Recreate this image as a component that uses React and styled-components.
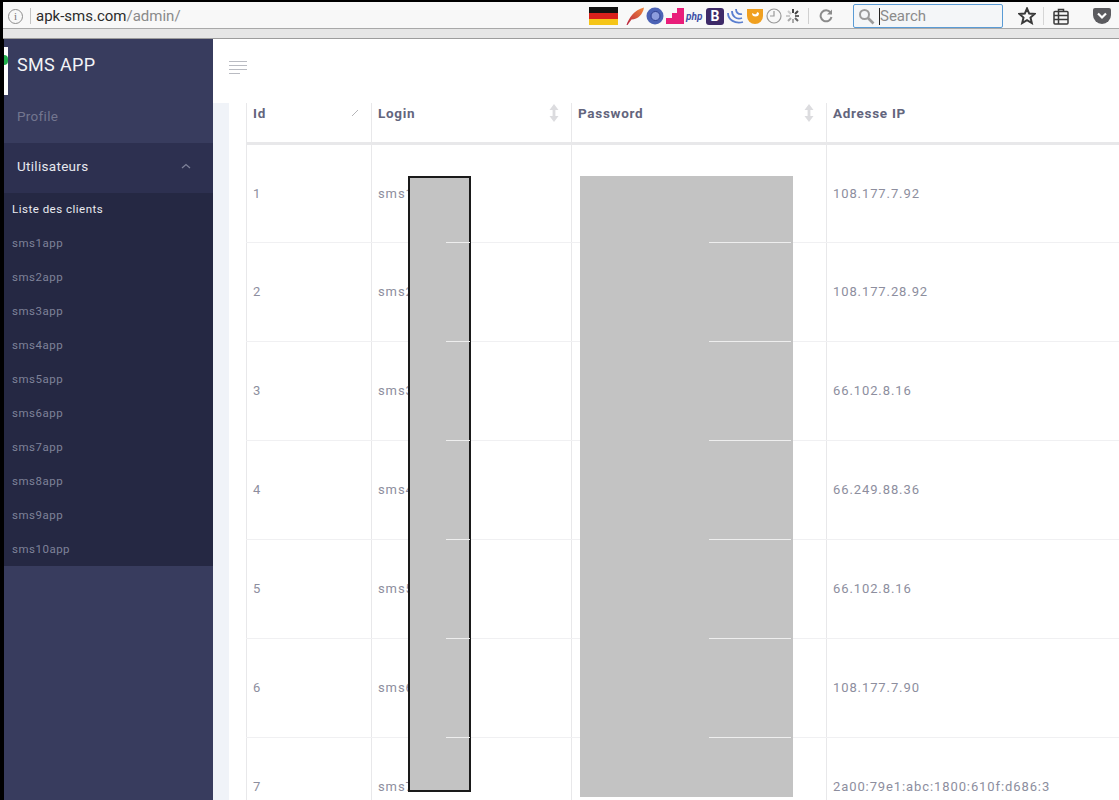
import styled, { createGlobalStyle } from "styled-components";

const GlobalStyle = createGlobalStyle`
  html, body {
    margin: 0;
    padding: 0;
    background: #000;
    font-family: Roboto, "Liberation Sans", sans-serif;
  }
`;

const clients = ["sms1app", "sms2app", "sms3app", "sms4app", "sms5app", "sms6app", "sms7app", "sms8app", "sms9app", "sms10app"];

const rows = [
  { id: 1, login: "sms1", ip: "108.177.7.92" },
  { id: 2, login: "sms2", ip: "108.177.28.92" },
  { id: 3, login: "sms3", ip: "66.102.8.16" },
  { id: 4, login: "sms4", ip: "66.249.88.36" },
  { id: 5, login: "sms5", ip: "66.102.8.16" },
  { id: 6, login: "sms6", ip: "108.177.7.90" },
  { id: 7, login: "sms7", ip: "2a00:79e1:abc:1800:610f:d686:3" },
];

const lineTops = [66, 165, 264, 363, 462, 561];

const SortIcon = () => (
  <svg width="10" height="18" viewBox="0 0 10 18" fill="#dcdcdf">
    <path d="M5 0 L9.5 6 H6.4 V12 H9.5 L5 18 L0.5 12 H3.6 V6 H0.5 Z" />
  </svg>
);

const App = () => {
  return (
    <Page>
      <GlobalStyle />
      <BrowserBar>
        <UrlRow>
          <InfoIcon>i</InfoIcon>
          <UrlDivider />
          <Url>
            apk-sms.com<UrlPath>/admin/</UrlPath>
          </Url>
          <Addons>
            <Flag>
              <svg width="29" height="18" viewBox="0 0 29 18">
                <rect width="29" height="6" fill="#111" />
                <rect y="6" width="29" height="6" fill="#d8201c" />
                <rect y="12" width="29" height="6" fill="#f5c518" />
              </svg>
            </Flag>
            <svg width="18" height="18" viewBox="0 0 18 18">
              <defs>
                <linearGradient id="feather" x1="0" y1="1" x2="1" y2="0">
                  <stop offset="0" stopColor="#b8213f" />
                  <stop offset="1" stopColor="#f08a3c" />
                </linearGradient>
              </defs>
              <path d="M0.5 18 C3 11 8 3 18 0.5 C17 7 12 12.5 5.5 12.5 L1.5 18 Z" fill="url(#feather)" />
            </svg>
            <svg width="18" height="18" viewBox="0 0 18 18">
              <circle cx="9" cy="9" r="8.5" fill="#4c63b6" />
              <circle cx="9.5" cy="9" r="4.5" fill="#8d9ddd" stroke="#2e3f8f" />
            </svg>
            <svg width="18" height="18" viewBox="0 0 18 18">
              <path d="M0 17 V11 H6 V6 H11 V1 H18 V17 Z" fill="#e91e7a" />
            </svg>
            <PhpMark>php</PhpMark>
            <BootMark>B</BootMark>
            <svg width="18" height="18" viewBox="0 0 18 18" fill="none" stroke="#5a7fd0" strokeWidth="1.8">
              <path d="M2 6 C2 13 9 17 17 15" />
              <path d="M6 4 C6 9 10 13 16 11" />
              <path d="M10 2 C10 5 12 8 16 7" />
            </svg>
            <svg width="18" height="18" viewBox="0 0 18 18">
              <path d="M1 2 H17 V9 A8 8 0 0 1 1 9 Z" fill="#f0a020" />
              <path d="M6 6 A3.5 3.5 0 0 0 13 6 L11 5 A2 2 0 0 1 8 7 Z" fill="#fff" />
            </svg>
            <svg width="16" height="18" viewBox="0 0 16 18" fill="none" stroke="#9a9a9a" strokeWidth="1.2">
              <circle cx="8" cy="9" r="7" />
              <path d="M8 4 V9 H4" />
            </svg>
            <svg width="17" height="18" viewBox="0 0 17 18" stroke="#8a8a8a" strokeWidth="2">
              <path d="M9 2 V6 M14 4 L11 7" stroke="#444" />
              <path d="M15 9 H11 M14 14 L11 11" stroke="#666" />
              <path d="M9 16 V12 M4 14 L7 11" stroke="#aaa" />
              <path d="M2 9 H6 M4 4 L7 7" stroke="#ccc" />
            </svg>
          </Addons>
          <ToolDivider />
          <ReloadIcon>
            <svg width="14" height="14" viewBox="0 0 14 14" fill="none" stroke="#8b8b8b" strokeWidth="2">
              <path d="M11.5 3.5 A5.5 5.5 0 1 0 12.5 8" />
              <path d="M13 0.5 V5.5 H8" fill="#8b8b8b" stroke="none" />
            </svg>
          </ReloadIcon>
          <SearchBox>
            <svg width="17" height="17" viewBox="0 0 17 17" fill="none" stroke="#9b9b9b" strokeWidth="2">
              <circle cx="6.5" cy="6.5" r="4.5" />
              <path d="M10 10 L15.5 15.5" strokeWidth="2.6" />
            </svg>
            <Caret />
            <SearchText>Search</SearchText>
          </SearchBox>
          <ToolIcons>
            <svg width="18" height="18" viewBox="0 0 18 18" fill="none" stroke="#3a3a3a" strokeWidth="2">
              <path d="M9 1.5 L11.2 6.6 L16.6 7 L12.5 10.6 L13.8 16 L9 13.1 L4.2 16 L5.5 10.6 L1.4 7 L6.8 6.6 Z" />
            </svg>
            <IconDivider />
            <svg width="16" height="17" viewBox="0 0 16 17" fill="none" stroke="#3a3a3a" strokeWidth="1.5">
              <rect x="1" y="3.5" width="14" height="12.5" rx="1" />
              <path d="M5.5 3.5 V1.5 H10.5 V3.5 M1 7.5 H15 M1 11.5 H15 M5.5 3.5 V16" />
            </svg>
            <PocketIcon>
              <svg width="18" height="16" viewBox="0 0 18 16">
                <path d="M2 0 H16 A2 2 0 0 1 18 2 V7 A9 9 0 0 1 0 7 V2 A2 2 0 0 1 2 0 Z" fill="#5b5b5f" />
                <path d="M5 5.5 L9 9.5 L13 5.5" fill="none" stroke="#fff" strokeWidth="2.2" />
              </svg>
            </PocketIcon>
          </ToolIcons>
        </UrlRow>
        <BarFooter />
      </BrowserBar>
      <Main>
        <Sidebar>
          <Brand>
            <LogoBar>
              <LogoDot />
            </LogoBar>
            <BrandName>SMS APP</BrandName>
          </Brand>
          <NavItem>Profile</NavItem>
          <NavGroup>
            Utilisateurs
            <svg width="10" height="6" viewBox="0 0 10 6" fill="none" stroke="#7d8098" strokeWidth="1.3">
              <path d="M1 5 L5 1.5 L9 5" />
            </svg>
          </NavGroup>
          <SubMenu>
            <SubItem $active>Liste des clients</SubItem>
            {clients.map((client) => (
              <SubItem key={client}>{client}</SubItem>
            ))}
          </SubMenu>
        </Sidebar>
        <Content>
          <TopBar>
            <svg width="18" height="15" viewBox="0 0 18 15" stroke="#b9bbc2" strokeWidth="1">
              <path d="M0 1.5 H18 M0 5.5 H18 M0 9.5 H18 M0 13.5 H11" />
            </svg>
          </TopBar>
          <Body>
            <Strip />
            <TableWrap>
              <Table>
                <colgroup>
                  <col width="125" />
                  <col width="200" />
                  <col width="255" />
                  <col width="293" />
                </colgroup>
                <thead>
                  <tr>
                    <HeadCell>
                      <HeadInner>
                        Id
                        <svg width="8" height="8" viewBox="0 0 8 8" stroke="#b5b5b8">
                          <path d="M1 7 L7 1" />
                        </svg>
                      </HeadInner>
                    </HeadCell>
                    <HeadCell>
                      <HeadInner>
                        Login
                        <SortIcon />
                      </HeadInner>
                    </HeadCell>
                    <HeadCell>
                      <HeadInner>
                        Password
                        <SortIcon />
                      </HeadInner>
                    </HeadCell>
                    <HeadCell>
                      <HeadInner>Adresse IP</HeadInner>
                    </HeadCell>
                  </tr>
                </thead>
                <tbody>
                  {rows.map((row) => (
                    <tr key={row.id}>
                      <Cell>{row.id}</Cell>
                      <Cell>{row.login}</Cell>
                      <Cell />
                      <Cell>{row.ip}</Cell>
                    </tr>
                  ))}
                </tbody>
              </Table>
            </TableWrap>
          </Body>
        </Content>
      </Main>
      <Redaction $left={408} $width={63} $height={616} $outlined>
        {lineTops.map((top) => (
          <Scratch key={top} $top={top - 2} $left={36} $width={24} />
        ))}
      </Redaction>
      <Redaction $left={580} $width={213} $height={621}>
        {lineTops.map((top) => (
          <Scratch key={top} $top={top} $left={129} $width={82} />
        ))}
      </Redaction>
    </Page>
  );
};

const Page = styled.div`
  position: relative;
  width: 1119px;
  height: 800px;
  overflow: hidden;
  background: #000;
  padding: 2px 0 0 3px;
  box-sizing: border-box;
  display: flex;
  flex-direction: column;
`;

const BrowserBar = styled.div`
  height: 37px;
  flex-shrink: 0;
  display: flex;
  flex-direction: column;
  background: #e6e6e6;
`;

const UrlRow = styled.div`
  height: 27px;
  box-sizing: border-box;
  display: flex;
  align-items: center;
  padding: 2px 0 0 5px;
  background: #f8f8f8;
  border-bottom: 1px solid #a9a9a9;
`;

const BarFooter = styled.div`
  flex: 1;
  border-bottom: 1px solid #9c9c9c;
`;

const InfoIcon = styled.span`
  width: 13px;
  height: 13px;
  border: 1px solid #8e8e8e;
  border-radius: 50%;
  color: #777;
  font: 11px/13px "Liberation Serif", serif;
  text-align: center;
`;

const UrlDivider = styled.span`
  width: 1px;
  height: 16px;
  margin: 0 5px 0 7px;
  background: #c4c4c4;
`;

const Url = styled.span`
  width: 553px;
  font-size: 15px;
  color: #2b2b2b;
  white-space: nowrap;
`;

const UrlPath = styled.span`
  color: #8a8a8a;
`;

const Addons = styled.div`
  display: flex;
  align-items: center;
  gap: 2px;
`;

const Flag = styled.span`
  display: flex;
  margin-right: 6px;
`;

const PhpMark = styled.span`
  width: 18px;
  color: #3f51a8;
  font-size: 10px;
  font-weight: 700;
  font-style: italic;
`;

const BootMark = styled.span`
  width: 18px;
  height: 17px;
  border-radius: 3px;
  background: #3d2a68;
  color: #fff;
  font-size: 14px;
  font-weight: 700;
  line-height: 17px;
  text-align: center;
`;

const ToolDivider = styled.span`
  width: 1px;
  height: 16px;
  margin: 0 10px 0 7px;
  background: #d0d0d0;
`;

const ReloadIcon = styled.span`
  display: flex;
  margin-right: 20px;
`;

const SearchBox = styled.div`
  width: 150px;
  height: 24px;
  box-sizing: border-box;
  display: flex;
  align-items: center;
  padding-left: 4px;
  background: #f4f6f8;
  border: 1px solid #5a9bd5;
  border-radius: 2px;
`;

const Caret = styled.span`
  width: 1px;
  height: 17px;
  margin-left: 4px;
  background: #222;
`;

const SearchText = styled.span`
  color: #8b8b8b;
  font-size: 15px;
`;

const ToolIcons = styled.div`
  display: flex;
  align-items: center;
  margin-left: 15px;
`;

const IconDivider = styled.span`
  width: 1px;
  height: 18px;
  margin: 0 9px 0 7px;
  background: #d6d6d6;
`;

const PocketIcon = styled.span`
  display: flex;
  margin-left: 24px;
`;

const Main = styled.div`
  flex: 1;
  min-height: 0;
  display: flex;
  padding-left: 1px;
`;

const Sidebar = styled.nav`
  width: 209px;
  flex-shrink: 0;
  background: #383c5e;
`;

const Brand = styled.div`
  height: 54px;
  display: flex;
  align-items: flex-start;
  color: #f2f3f6;
`;

const LogoBar = styled.span`
  position: relative;
  width: 4px;
  height: 48px;
  margin-top: 8px;
  background: #fff;
`;

const LogoDot = styled.span`
  position: absolute;
  left: 0;
  top: 8px;
  width: 4px;
  height: 10px;
  border-radius: 0 5px 5px 0;
  background: #1fae4b;
`;

const BrandName = styled.span`
  margin: 15px 0 0 9px;
  font-size: 18px;
  line-height: 22px;
  letter-spacing: 0.35px;
`;

const NavItem = styled.div`
  height: 50px;
  box-sizing: border-box;
  display: flex;
  align-items: center;
  padding: 0 0 4px 13px;
  color: #73768f;
  font-size: 13.5px;
  letter-spacing: 0.3px;
`;

const NavGroup = styled.div`
  height: 50px;
  box-sizing: border-box;
  display: flex;
  align-items: center;
  justify-content: space-between;
  padding: 0 22px 4px 13px;
  background: #2d3050;
  color: #e6e7ee;
  font-size: 13.5px;
  letter-spacing: 0.3px;
`;

const SubMenu = styled.div`
  padding-left: 8px;
  height: 373px;
  box-sizing: border-box;
  background: #252843;
`;

const SubItem = styled.div`
  height: 34px;
  box-sizing: border-box;
  padding-bottom: 2px;
  display: flex;
  align-items: center;
  color: ${(props) => (props.$active ? "#e9eaf0" : "#7f8299")};
  font-size: 11.5px;
  letter-spacing: 0.5px;
`;

const Content = styled.div`
  flex: 1;
  min-width: 0;
  display: flex;
  flex-direction: column;
  background: #fff;
`;

const TopBar = styled.div`
  height: 64px;
  flex-shrink: 0;
  display: flex;
  align-items: center;
  padding: 0 0 8px 16px;
  box-sizing: border-box;
`;

const Body = styled.div`
  flex: 1;
  min-height: 0;
  display: flex;
`;

const Strip = styled.div`
  width: 16px;
  flex-shrink: 0;
  background: #f0f3f8;
`;

const TableWrap = styled.div`
  flex: 1;
  min-width: 0;
  padding-left: 17px;
  overflow: hidden;
`;

const Table = styled.table`
  width: 873px;
  table-layout: fixed;
  border-collapse: collapse;
`;

const HeadCell = styled.th`
  height: 40px;
  padding: 0 12px 0 6px;
  box-sizing: border-box;
  border-left: 1px solid #e8e8ea;
  border-bottom: 3px solid #e8e8ea;
  color: #63657d;
  font-size: 13.5px;
  font-weight: 700;
  letter-spacing: 0.7px;
  text-align: left;
  vertical-align: top;
`;

const HeadInner = styled.div`
  height: 20px;
  display: flex;
  align-items: center;
  justify-content: space-between;
`;

const Cell = styled.td`
  height: 99px;
  padding: 0 6px;
  box-sizing: border-box;
  border-left: 1px solid #e8e8ea;
  border-bottom: 1px solid #f0f0f2;
  color: #8d8e9e;
  font-size: 13px;
  letter-spacing: 0.9px;
  white-space: nowrap;
`;

const Redaction = styled.div`
  position: absolute;
  top: 176px;
  left: ${(props) => props.$left}px;
  width: ${(props) => props.$width}px;
  height: ${(props) => props.$height}px;
  box-sizing: border-box;
  background: #c3c3c3;
  border: ${(props) => (props.$outlined ? "2px solid #1a1a1a" : "none")};
`;

const Scratch = styled.span`
  position: absolute;
  top: ${(props) => props.$top}px;
  left: ${(props) => props.$left}px;
  width: ${(props) => props.$width}px;
  height: 1px;
  background: #eeeeee;
`;

export default App;
